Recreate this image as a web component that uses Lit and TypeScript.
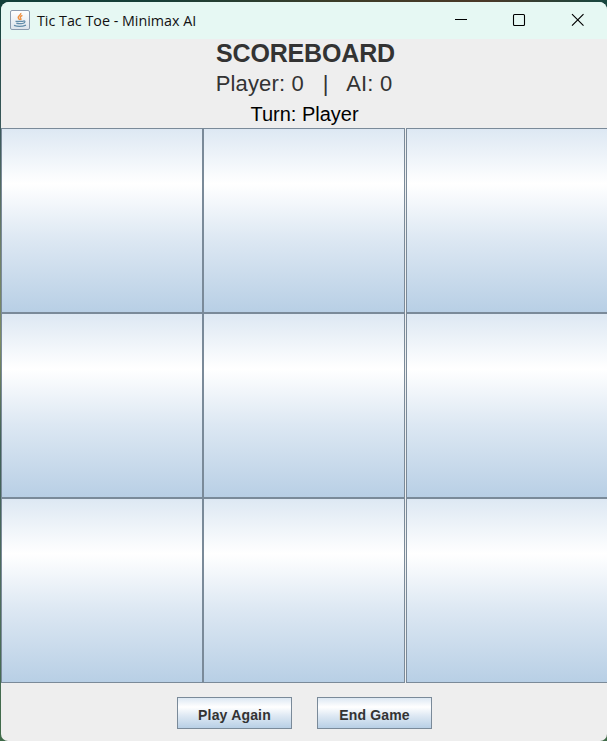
import { LitElement, html, css } from "lit";
import { customElement, state } from "lit/decorators.js";

@customElement("app-root")
export class AppRoot extends LitElement {
  @state() private cells: string[] = Array(9).fill("");

  static styles = css`
    :host {
      display: block;
      width: 607px;
      height: 741px;
      box-sizing: border-box;
      padding: 2px 0 0 1px;
      overflow: hidden;
      background:
        linear-gradient(90deg, #12403a, #173f38 25%, #3c3d28 55%, #4b3928 80%, #17473f) 0 0 / 100% 10px no-repeat,
        linear-gradient(#12403a, #3d5a5c 18%, #6f8068 34%, #7d8c62 46%, #3f6058 60%, #4f6d5e 80%, #3f6a48);
      font-family: "Liberation Sans", Arial, sans-serif;
      color: #333;
    }
    .window {
      width: 606px;
      height: 739px;
      display: flex;
      flex-direction: column;
      background: #eee;
      border-radius: 8px 8px 7px 7px;
      overflow: hidden;
    }
    .titlebar {
      height: 37px;
      flex: none;
      display: flex;
      align-items: center;
      background: #e6f8f3;
      color: #111;
    }
    .logo {
      width: 20px;
      height: 20px;
      margin: 0 7px 2px 9px;
    }
    .title {
      flex: 1;
      font: 14.3px/20px "Open Sans", "Noto Sans", sans-serif;
      white-space: nowrap;
    }
    .control {
      width: 58px;
      height: 37px;
      flex: none;
    }
    .control:last-child {
      margin-right: 1px;
    }
    .score {
      height: 89px;
      flex: none;
      display: flex;
      flex-direction: column;
      align-items: center;
      white-space: pre;
    }
    .score > div {
      flex: none;
    }
    .heading {
      font-size: 25px;
      line-height: 28px;
      height: 30px;
      font-weight: bold;
      letter-spacing: -0.15px;
      padding-left: 3px;
    }
    .tally {
      font-size: 22px;
      line-height: 30px;
      letter-spacing: 0.16px;
    }
    .turn {
      font-size: 20px;
      line-height: 30px;
      color: #000;
      padding-left: 1px;
    }
    .board {
      flex: none;
      display: grid;
      grid-template-columns: 202px 203px 202px;
      grid-template-rows: repeat(3, 185px);
      width: 607px;
    }
    button {
      box-sizing: border-box;
      margin: 0;
      padding: 0;
      border: 1px solid #7a8a99;
      border-radius: 0;
      font: bold 14px "Liberation Sans", Arial, sans-serif;
      color: #333;
      background: linear-gradient(#dde8f3, #fff 30%, #dde8f3 60%, #b8cfe5);
    }
    .cell {
      width: 202px;
      font-size: 60px;
    }
    .actions {
      flex: 1;
      display: flex;
      justify-content: center;
      gap: 25px;
      padding: 14px 0 0 1px;
    }
    .action {
      width: 115px;
      height: 32px;
      padding-top: 3px;
      letter-spacing: 0.18px;
    }
  `;

  render() {
    return html`
      <div class="window">
        <div class="titlebar">
          <svg class="logo" viewBox="0 0 20 20" fill="none">
            <defs>
              <linearGradient id="tile" x2="0" y2="1">
                <stop stop-color="#fff" />
                <stop offset="1" stop-color="#dce3eb" />
              </linearGradient>
            </defs>
            <rect x=".5" y=".5" width="19" height="19" rx="1.5" fill="url(#tile)" stroke="#8b9bae" />
            <path d="M10.8 3c.7 2-3 3-2.6 4.7.1.9 1.2 1.5 1.5 2.3M12.4 5.4c-2 1-2.8 1.8-1.6 3 .4.5.2 1-.3 1.5" stroke="#ef9143" stroke-width="1.4" />
            <path d="M5.5 11.3h8M6.3 13.2q3.4 1 6.6 0M13.3 11c2.4-.5 2 1.8-.5 2.4M4 15.4q6 2 12-.3" stroke="#638daa" stroke-width="1.2" />
          </svg>
          <div class="title">Tic Tac Toe - Minimax AI</div>
          <svg class="control" viewBox="0 0 58 37"><path d="M23 17.5h12" stroke="#000" /></svg>
          <svg class="control" viewBox="0 0 58 37"><rect x="23.5" y="12.5" width="11" height="11" rx="1" fill="none" stroke="#000" stroke-width="1.1" /></svg>
          <svg class="control" viewBox="0 0 58 37"><path d="M24 12.2l11.5 11.5M35.5 12.2L24 23.7" stroke="#000" stroke-width="1.15" /></svg>
        </div>
        <div class="score">
          <div class="heading">SCOREBOARD</div>
          <div class="tally">Player: 0   |   AI: 0</div>
          <div class="turn">Turn: Player</div>
        </div>
        <div class="board">
          ${this.cells.map((mark) => html`<button class="cell">${mark}</button>`)}
        </div>
        <div class="actions">
          <button class="action">Play Again</button>
          <button class="action">End Game</button>
        </div>
      </div>
    `;
  }
}
